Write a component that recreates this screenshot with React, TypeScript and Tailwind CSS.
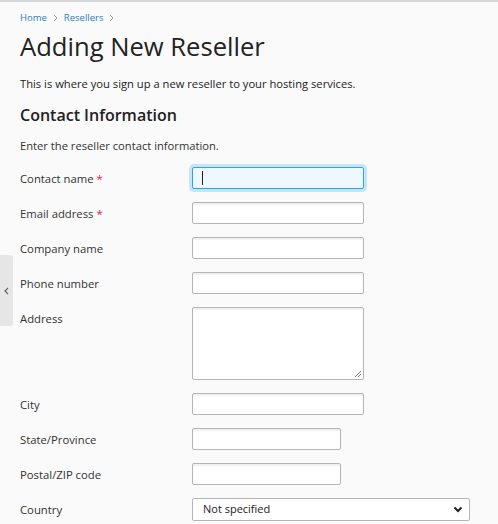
import React from "react";

const F = { fontFamily: '"Open Sans", "Noto Sans", sans-serif' };

function Row({ label, required, children, h = "h-[35px]" }: { label: string; required?: boolean; children: React.ReactNode; h?: string }) {
  return (
    <div className={`flex items-start ${h}`}>
      <div className="w-[172px] shrink-0 pt-[4px] text-[11.3px] leading-[16px] text-[#333]">
        {label}
        {required && <span className="text-[#d0284a]"> *</span>}
      </div>
      {children}
    </div>
  );
}

const inputCls =
  "block h-[22px] border border-[#b5b5b5] bg-white rounded-[2px] shadow-[inset_0_2px_1px_rgba(0,0,0,0.06)] outline-none";

export default function App() {
  return (
    <div style={F} className="relative min-h-[524px] w-[498px] bg-[#fafafa] border-t-2 border-[#d6d6d6] overflow-hidden">
      <div className="absolute left-0 top-[253px] w-[13px] h-[71px] bg-[#e6e6e6] rounded-r-[3px] flex items-center justify-center">
        <svg width="5" height="8" viewBox="0 0 5 8"><path d="M4 1 L1 4 L4 7" fill="none" stroke="#666" strokeWidth="1.2" /></svg>
      </div>
      <div className="pl-5 pt-[10px]">
        <div className="flex items-center text-[9.5px] leading-[12px] h-[12px]">
          <span className="text-[#2a7fb8]">Home</span>
          <svg className="mx-[6px]" width="5" height="8" viewBox="0 0 5 8"><path d="M1 1 L4 4 L1 7" fill="none" stroke="#999" strokeWidth="1" /></svg>
          <span className="text-[#2a7fb8]">Resellers</span>
          <svg className="mx-[6px]" width="5" height="8" viewBox="0 0 5 8"><path d="M1 1 L4 4 L1 7" fill="none" stroke="#999" strokeWidth="1" /></svg>
        </div>
        <h1 className="mt-[7px] text-[25.6px] leading-[32px] text-[#222] font-normal">Adding New Reseller</h1>
        <p className="mt-[13px] text-[11.2px] leading-[16px] text-[#222]">This is where you sign up a new reseller to your hosting services.</p>
        <h2 className="mt-[12px] text-[16px] leading-[22px] font-semibold text-[#222]">Contact Information</h2>
        <p className="mt-[12px] text-[11.2px] leading-[16px] text-[#333]">Enter the reseller contact information.</p>
        <div className="mt-[13px]">
          <Row label="Contact name" required>
            <div className="w-[172px] h-[22px] border border-[#2ba6e1] bg-[#f0f8ff] rounded-[2px] shadow-[0_0_0_3px_#c3e6fb] flex items-center pl-[9px]">
              <div className="w-px h-[14px] bg-[#222]" />
            </div>
          </Row>
          <Row label="Email address" required><div className={`${inputCls} w-[172px]`} /></Row>
          <Row label="Company name"><div className={`${inputCls} w-[172px]`} /></Row>
          <Row label="Phone number"><div className={`${inputCls} w-[172px]`} /></Row>
          <Row label="Address" h="h-[86px]">
            <div className={`relative w-[172px] h-[73px] border border-[#b5b5b5] bg-white rounded-[2px] shadow-[inset_0_2px_1px_rgba(0,0,0,0.06)]`}>
              <svg className="absolute right-[1px] bottom-[1px]" width="9" height="9" viewBox="0 0 9 9">
                <path d="M8 2 L2 8 M8 5 L5 8" stroke="#777" strokeWidth="1" />
              </svg>
            </div>
          </Row>
          <Row label="City"><div className={`${inputCls} w-[172px]`} /></Row>
          <Row label="State/Province"><div className={`${inputCls} w-[149px]`} /></Row>
          <Row label="Postal/ZIP code"><div className={`${inputCls} w-[149px]`} /></Row>
          <Row label="Country">
            <div className="w-[278px] h-[23px] border border-[#b5b5b5] bg-white rounded-[2px] flex items-center justify-between pl-[10px] pr-[6px] text-[11px] text-[#222]">
              <span>Not specified</span>
              <svg width="10" height="7" viewBox="0 0 10 7"><path d="M1.5 1.5 L5 5 L8.5 1.5" fill="none" stroke="#222" strokeWidth="2" /></svg>
            </div>
          </Row>
        </div>
      </div>
    </div>
  );
}
